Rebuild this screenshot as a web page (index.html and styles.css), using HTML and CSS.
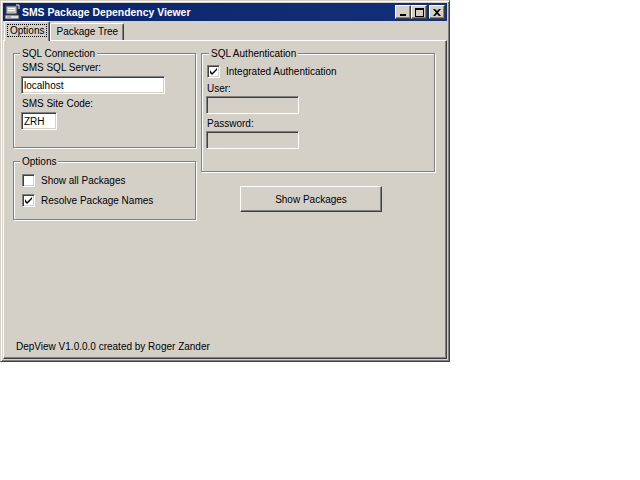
FILE: index.html
```html
<!DOCTYPE html>
<html>
<head>
<meta charset="utf-8">
<link rel="stylesheet" href="styles.css">
</head>
<body>
<div class="window">
  <div class="titlebar">
    <svg class="appicon" width="16" height="16" viewBox="0 0 16 16">
      <rect x="2" y="2" width="11" height="8" fill="#c0c0c0" stroke="#404040" stroke-width="1"/>
      <rect x="4" y="4" width="7" height="1" fill="#fff"/>
      <rect x="4" y="6" width="7" height="1" fill="#fff"/>
      <rect x="1" y="11" width="14" height="4" fill="#e0e0e0" stroke="#404040" stroke-width="1"/>
      <rect x="3" y="12.5" width="4" height="1" fill="#808080"/>
      <path d="M12 1 L15 1 L15 5" stroke="#fff" stroke-width="1" fill="none"/>
    </svg>
    <span class="title">SMS Package Dependency Viewer</span>
    <div class="caption-buttons">
      <div class="cbtn"><svg width="8" height="7" viewBox="0 0 8 7"><rect x="1" y="5" width="6" height="2" fill="#000"/></svg></div>
      <div class="cbtn"><svg width="9" height="9" viewBox="0 0 9 9"><rect x="0.5" y="0.5" width="8" height="8" fill="none" stroke="#000"/><rect x="0" y="0" width="9" height="2" fill="#000"/></svg></div>
      <div class="cbtn close"><svg width="8" height="7" viewBox="0 0 8 7"><path d="M0 0 L2 0 L4 2 L6 0 L8 0 L5 3.5 L8 7 L6 7 L4 5 L2 7 L0 7 L3 3.5 Z" fill="#000"/></svg></div>
    </div>
  </div>
  <div class="tabs">
    <div class="tab selected"><span class="focus">Options</span></div>
    <div class="tab">Package Tree</div>
  </div>
  <div class="panel">
    <div class="columns">
      <div class="col-left">
        <fieldset class="group conn">
          <legend>SQL Connection</legend>
          <div class="label first">SMS SQL Server:</div>
          <div class="textbox server">localhost</div>
          <div class="label">SMS Site Code:</div>
          <div class="textbox site">ZRH</div>
        </fieldset>
        <fieldset class="group opts">
          <legend>Options</legend>
          <div class="check first">
            <span class="box"></span><span>Show all Packages</span>
          </div>
          <div class="check">
            <span class="box"><svg width="7" height="7" viewBox="0 0 7 7"><path d="M0 2 L0 5 L2 7 L7 2 L7 0 L2 5 Z" fill="#000"/></svg></span><span>Resolve Package Names</span>
          </div>
        </fieldset>
      </div>
      <div class="col-right">
        <fieldset class="group auth">
          <legend>SQL Authentication</legend>
          <div class="check first">
            <span class="box"><svg width="7" height="7" viewBox="0 0 7 7"><path d="M0 2 L0 5 L2 7 L7 2 L7 0 L2 5 Z" fill="#000"/></svg></span><span>Integrated Authentication</span>
          </div>
          <div class="label">User:</div>
          <div class="textbox disabled"></div>
          <div class="label">Password:</div>
          <div class="textbox disabled"></div>
        </fieldset>
        <div class="button">Show Packages</div>
      </div>
    </div>
    <div class="footer">DepView V1.0.0.0 created by Roger Zander</div>
  </div>
</div>
</body>
</html>
```

FILE: styles.css
```css
html, body {
  margin: 0;
  padding: 0;
  background: #ffffff;
}
body {
  font-family: "Liberation Sans", Arial, sans-serif;
  font-size: 10px;
  color: #000;
}
.window {
  width: 450px;
  height: 362px;
  box-sizing: border-box;
  background: #d4d0c8;
  border: 1px solid;
  border-color: #d4d0c8 #404040 #404040 #d4d0c8;
  box-shadow: inset 1px 1px 0 #ffffff, inset -1px -1px 0 #808080;
  padding: 2px;
  display: flex;
  flex-direction: column;
}
.titlebar {
  height: 18px;
  flex: none;
  background: linear-gradient(to right, #0a246a, #12307a);
  display: flex;
  align-items: center;
  padding-left: 1px;
}
.appicon {
  flex: none;
  margin-right: 2px;
}
.title {
  color: #fff;
  font-weight: bold;
  font-size: 10.4px;
  flex: 1;
  white-space: nowrap;
}
.caption-buttons {
  display: flex;
  margin-right: 2px;
}
.cbtn {
  width: 16px;
  height: 14px;
  box-sizing: border-box;
  background: #d4d0c8;
  border: 1px solid;
  border-color: #ffffff #404040 #404040 #ffffff;
  box-shadow: inset -1px -1px 0 #808080;
  display: flex;
  align-items: center;
  justify-content: center;
}
.cbtn.close {
  margin-left: 2px;
}
.tabs {
  height: 19px;
  flex: none;
  display: flex;
  align-items: flex-end;
  padding-left: 1px;
  position: relative;
  z-index: 1;
}
.tab {
  height: 17px;
  box-sizing: border-box;
  padding: 0 5px;
  border: 1px solid;
  border-bottom: none;
  border-color: #ffffff #404040 transparent #ffffff;
  box-shadow: inset -1px 0 0 #808080;
  border-radius: 2px 2px 0 0;
  line-height: 15px;
  white-space: nowrap;
}
.tab.selected {
  height: 20px;
  margin-bottom: -1px;
  background: #d4d0c8;
  padding: 2px 3px 0;
  line-height: 14px;
}
.focus {
  outline: 1px dotted #000;
  padding: 0 2px;
}
.panel {
  flex: 1;
  box-sizing: border-box;
  border: 1px solid;
  border-color: #ffffff #404040 #404040 #ffffff;
  box-shadow: inset -1px -1px 0 #808080;
  display: flex;
  flex-direction: column;
  padding: 6px 0 5px 9px;
}
.columns {
  display: flex;
  gap: 5px;
}
.col-left {
  width: 183px;
  display: flex;
  flex-direction: column;
}
.col-right {
  width: 234px;
  display: flex;
  flex-direction: column;
}
.group {
  margin: 0;
  box-sizing: border-box;
  border: 1px solid #808080;
  box-shadow: inset 1px 1px 0 #ffffff, 1px 1px 0 #ffffff;
  padding: 0 4px 0 8px;
  min-width: 0;
}
.group legend {
  padding: 0 2px;
  margin-left: -2px;
  line-height: 13px;
  background: #d4d0c8;
}
.conn {
  height: 101px;
}
.opts {
  height: 65px;
  margin-top: 7px;
}
.auth {
  height: 125px;
  padding-left: 5px;
}
.auth legend {
  margin-left: 2px;
}
.label {
  line-height: 13px;
  margin-top: 3px;
}
.label.first {
  margin-top: 1px;
}
.textbox {
  height: 18px;
  box-sizing: border-box;
  margin-top: 2px;
  margin-left: -1px;
  background: #ffffff;
  border: 1px solid;
  border-color: #808080 #ffffff #ffffff #808080;
  box-shadow: inset 1px 1px 0 #404040, inset -1px -1px 0 #d4d0c8;
  padding: 2px 0 0 2px;
  line-height: 13px;
}
.server {
  width: 144px;
}
.site {
  width: 36px;
}
.textbox.disabled {
  width: 93px;
  background: #d4d0c8;
  margin-top: 1px;
}
.check {
  display: flex;
  align-items: center;
  gap: 6px;
  height: 13px;
  line-height: 13px;
  margin-top: 7px;
}
.opts .check.first {
  margin-top: 6px;
}
.auth .check.first {
  margin-top: 5px;
  margin-bottom: 4px;
}
.box {
  width: 13px;
  height: 13px;
  flex: none;
  box-sizing: border-box;
  background: #ffffff;
  border: 1px solid;
  border-color: #808080 #ffffff #ffffff #808080;
  box-shadow: inset 1px 1px 0 #404040, inset -1px -1px 0 #d4d0c8;
  display: flex;
  align-items: center;
  justify-content: center;
}
.button {
  width: 142px;
  height: 26px;
  box-sizing: border-box;
  margin: 14px 0 0 39px;
  border: 1px solid;
  border-color: #ffffff #404040 #404040 #ffffff;
  box-shadow: inset -1px -1px 0 #808080;
  display: flex;
  align-items: center;
  justify-content: center;
}
.footer {
  margin-top: auto;
  padding-left: 3px;
  line-height: 13px;
}
```
